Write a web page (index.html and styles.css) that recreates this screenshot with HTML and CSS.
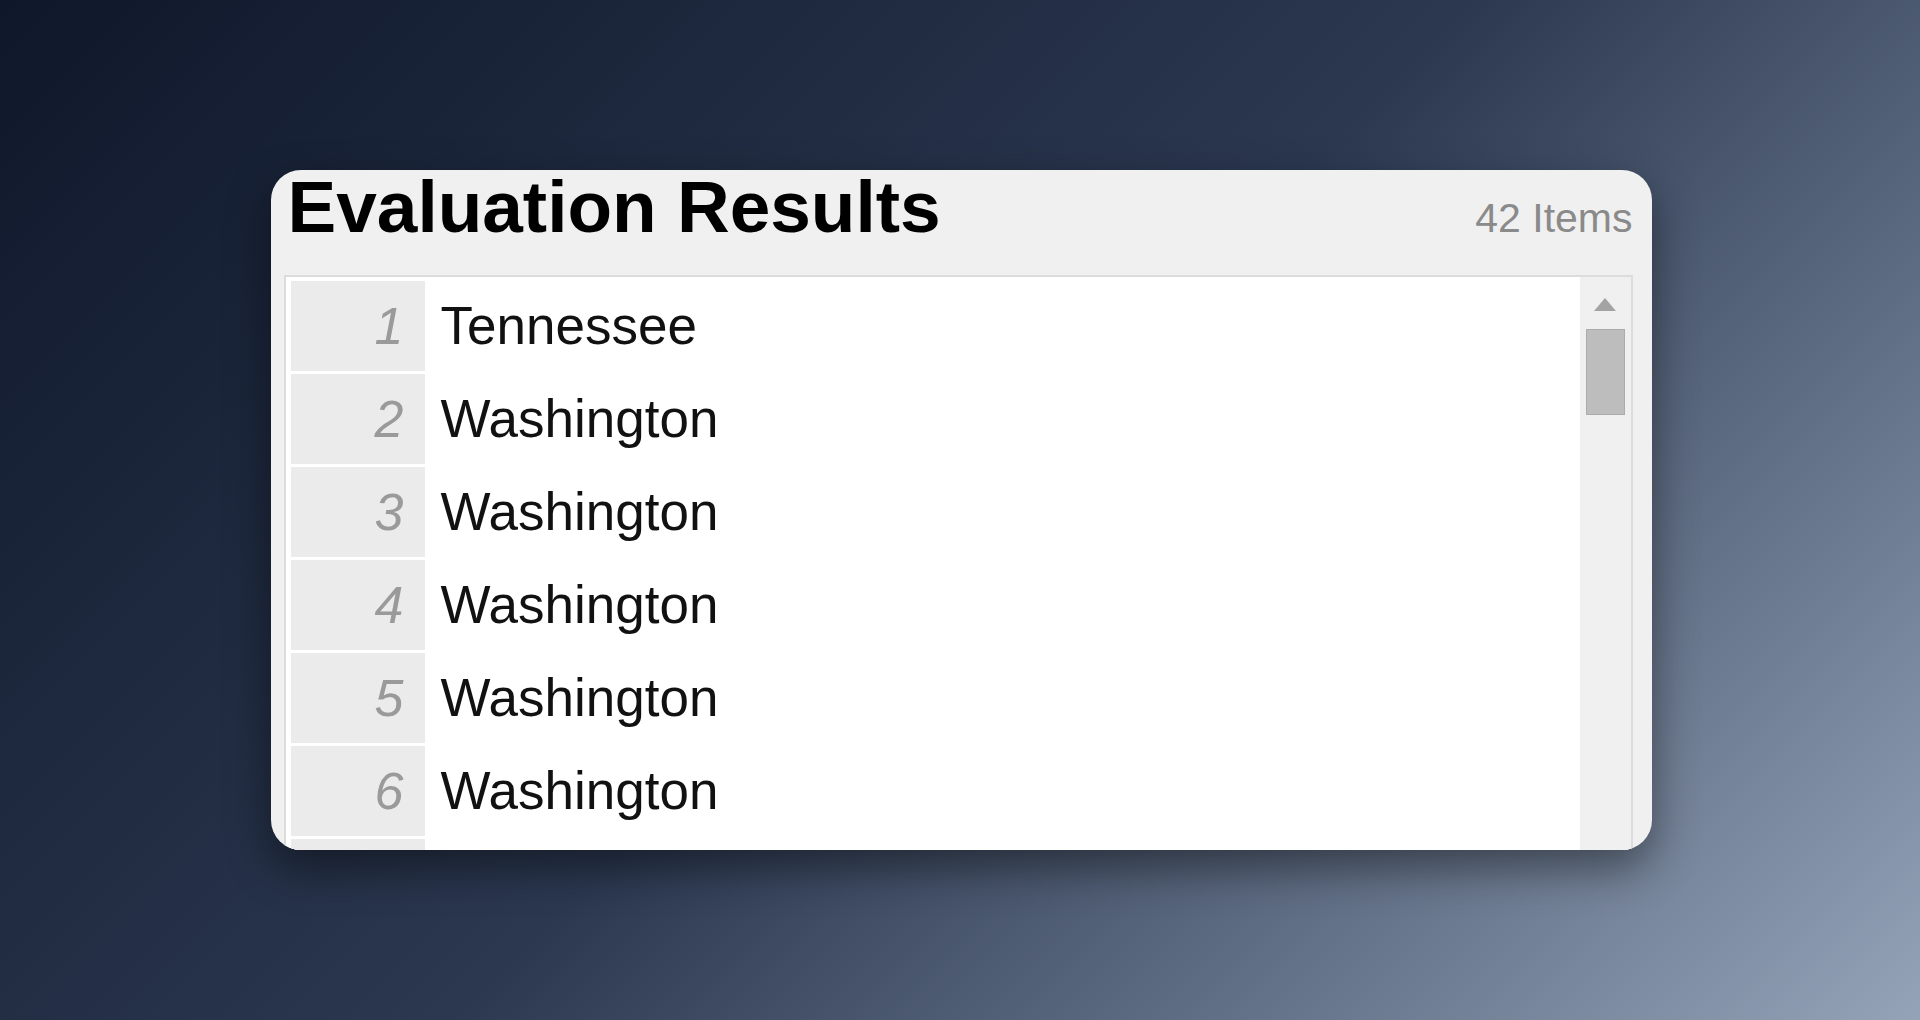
FILE: index.html
```html
<!DOCTYPE html>
<html lang="en">
<head>
<meta charset="UTF-8">
<title>Evaluation Results</title>
<link rel="stylesheet" href="styles.css">
</head>
<body>

<div class="card">
    <div class="header">
        <h1>Evaluation Results</h1>
        <span class="count">42 Items</span>
    </div>

    <div class="list">
        <div class="rows">
            <div class="row"><div class="num">1</div><div class="name">Tennessee</div></div>
            <div class="row"><div class="num">2</div><div class="name">Washington</div></div>
            <div class="row"><div class="num">3</div><div class="name">Washington</div></div>
            <div class="row"><div class="num">4</div><div class="name">Washington</div></div>
            <div class="row"><div class="num">5</div><div class="name">Washington</div></div>
            <div class="row"><div class="num">6</div><div class="name">Washington</div></div>
            <div class="row"><div class="num">7</div><div class="name">Washington</div></div>
        </div>
        <div class="scrollbar">
            <div class="arrow-up"></div>
            <div class="thumb"></div>
        </div>
    </div>
</div>

</body>
</html>
```

FILE: styles.css
```css
html, body {
    height: 100%;
}
body {
    margin: 0;
    padding: 0;
    background: linear-gradient(135deg, #0f172a 0%, #2b3850 50%, #94a3b8 100%);
    font-family: "Liberation Sans", Arial, sans-serif;
    display: flex;
    justify-content: center;
    align-items: center;
}
.card {
    width: 1381px;
    height: 680px;
    margin-left: 2px;
    box-sizing: border-box;
    padding: 0 19px 0 13px;
    background-color: #f0f0f0;
    border-radius: 30px;
    overflow: hidden;
    box-shadow: 0 18px 45px rgba(0, 0, 0, 0.45);
}
.header {
    display: flex;
    justify-content: space-between;
    align-items: baseline;
    padding-left: 4px;
    margin-bottom: 32px;
}
.header h1 {
    margin: 0;
    font-size: 73px;
    line-height: 1;
    font-weight: bold;
    color: #000;
}
.count {
    font-size: 41px;
    line-height: 1;
    color: #8a8a8a;
}
.list {
    display: flex;
    height: 700px;
    background-color: #fff;
    border: 2px solid #dcdcdc;
}
.rows {
    flex: 1;
    padding: 4px 0 0 5px;
}
.row {
    display: flex;
    height: 90px;
    margin-bottom: 3px;
}
.num {
    width: 134px;
    box-sizing: border-box;
    padding-right: 21px;
    background-color: #ebebeb;
    text-align: right;
    font-style: italic;
    font-size: 52px;
    line-height: 90px;
    color: #9a9a9a;
}
.name {
    padding-left: 16px;
    font-size: 53px;
    line-height: 90px;
    color: #111;
}
.scrollbar {
    width: 51px;
    background-color: #f0f0f0;
    display: flex;
    flex-direction: column;
    align-items: center;
}
.arrow-up {
    width: 0;
    height: 0;
    margin-top: 21px;
    border-left: 11.5px solid transparent;
    border-right: 11.5px solid transparent;
    border-bottom: 13px solid #a3a3a3;
}
.thumb {
    width: 39px;
    height: 86px;
    box-sizing: border-box;
    margin-top: 18px;
    background-color: #bdbdbd;
    border: 1px solid #acacac;
}
```
